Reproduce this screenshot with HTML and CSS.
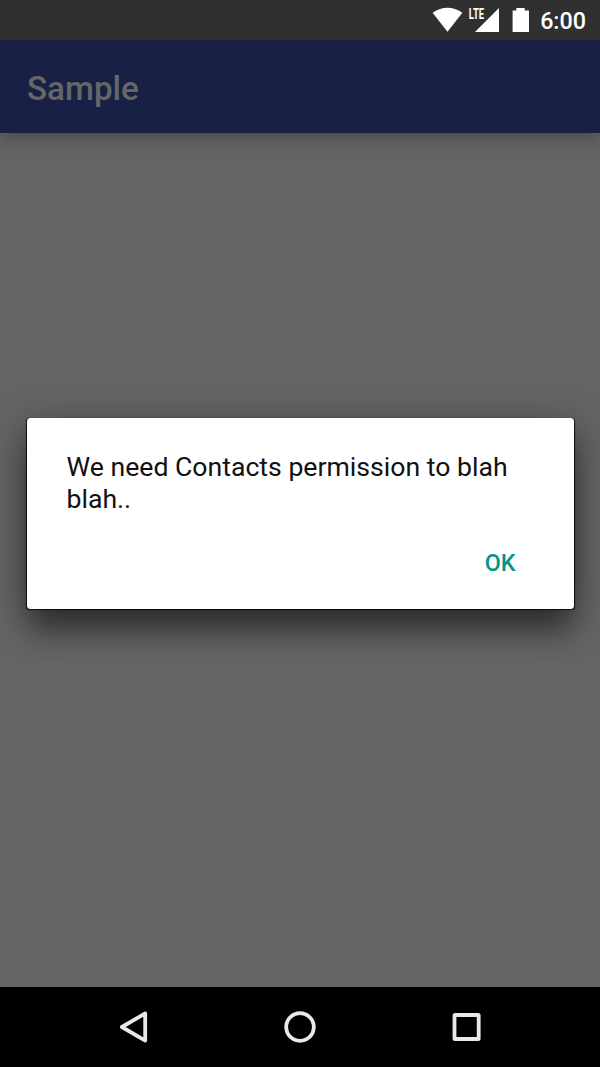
FILE: index.html
```html
<!DOCTYPE html>
<html lang="en">
<head>
<meta charset="utf-8">
<title>Sample</title>
<link rel="stylesheet" href="styles.css">
</head>
<body>
<div class="screen">
  <div class="status-bar">
    <svg class="status-icons" width="100" height="40" viewBox="0 0 100 40" aria-hidden="true">
      <path d="M0.6 12.7Q15.5 3 30.4 12.7L15.5 31.8Z"/>
      <text class="lte" x="36.8" y="18.7" textLength="15.4" lengthAdjust="spacingAndGlyphs">LTE</text>
      <path d="M67 8V32H43Z"/>
      <path d="M84.3 8H92.7V10.4H97V32H80.6V10.4H84.3Z"/>
    </svg>
    <span class="clock">6:00</span>
  </div>
  <header class="app-bar"><h1 class="app-title">Sample</h1></header>
  <main class="content">
    <section class="dialog" role="dialog">
      <p class="message">We need Contacts permission to blah blah..</p>
      <div class="actions"><button class="action">OK</button></div>
    </section>
  </main>
  <nav class="nav-bar">
    <svg class="nav-icon" width="34" height="34" viewBox="0 0 34 34"><path d="M28.2 3.4V30.6L4.9 17Z"/></svg>
    <svg class="nav-icon" width="34" height="34" viewBox="0 0 34 34"><circle cx="17" cy="17" r="13.8"/></svg>
    <svg class="nav-icon" width="34" height="34" viewBox="0 0 34 34"><rect x="4.5" y="5" width="24.2" height="24" rx="0.6"/></svg>
  </nav>
</div>
</body>
</html>
```
FILE: styles.css
```css
body {
  margin: 0;
  font-family: Roboto, "Liberation Sans", sans-serif;
}

.screen {
  display: flex;
  flex-direction: column;
  width: 600px;
  height: 1067px;
  overflow: hidden;
  background: #646464;
}

.status-bar {
  position: relative;
  z-index: 1;
  display: flex;
  justify-content: flex-end;
  align-items: center;
  height: 40px;
  padding-right: 14px;
  background: #303030;
}

.status-icons {
  margin-right: 8px;
  fill: #fff;
}

.lte {
  font-size: 14.5px;
  font-weight: 700;
}

.clock {
  padding-top: 2px;
  font-size: 23.3px;
  font-weight: 500;
  line-height: 38px;
  color: #fff;
}

.app-bar {
  display: flex;
  align-items: center;
  height: 93px;
  padding: 0 27px;
  background: #192046;
  box-shadow: 0 6px 14px rgba(0, 0, 0, 0.24);
}

.app-title {
  margin: 4px 0 0;
  font-size: 33.2px;
  font-weight: 500;
  line-height: 40px;
  color: #666;
}

.content {
  flex: 1;
  padding: 285px 26.5px 0;
}

.dialog {
  box-sizing: border-box;
  width: 547px;
  height: 191px;
  padding: 34px 39px 0 40px;
  border-radius: 3.5px;
  background: #fff;
  box-shadow: 0 0.5px 1px 0.5px rgba(0, 0, 0, 0.85), 0 26px 26px -3px rgba(0, 0, 0, 0.31), 0 10px 38px rgba(0, 0, 0, 0.42);
}

.message {
  margin: 0;
  font-size: 26.63px;
  line-height: 31.5px;
  color: #111;
}

.actions {
  display: flex;
  justify-content: flex-end;
  margin-top: 31px;
}

.action {
  margin-right: 19px;
  padding: 0;
  border: 0;
  background: none;
  font: 500 23.3px/34px Roboto, sans-serif;
  color: #009688;
}

.nav-bar {
  display: flex;
  justify-content: center;
  align-items: center;
  gap: 132.5px;
  height: 80px;
  background: #000;
}

.nav-icon {
  fill: none;
  stroke: #eae8e9;
  stroke-width: 3.8;
  stroke-linejoin: round;
}
```
